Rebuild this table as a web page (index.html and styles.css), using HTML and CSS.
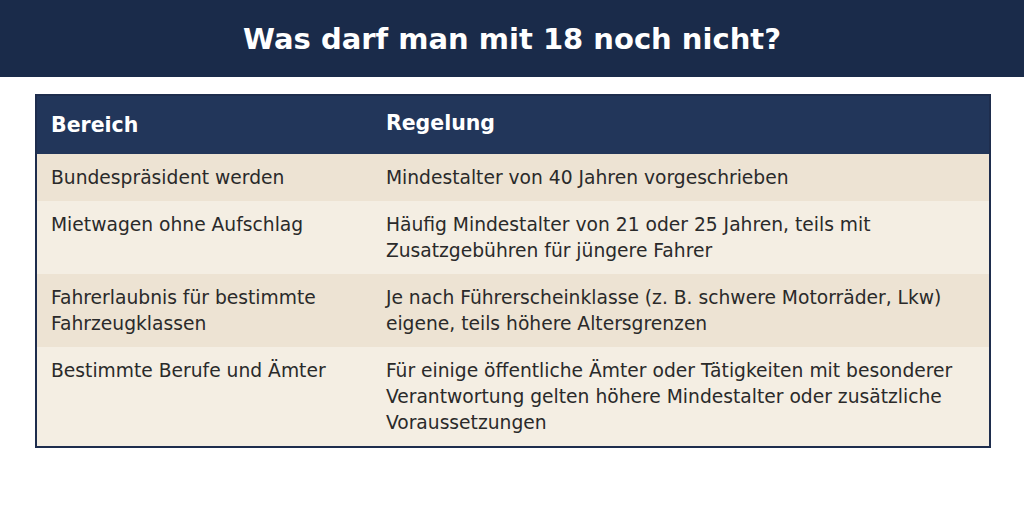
FILE: index.html
```html
<!DOCTYPE html>
<html lang="de">
<head>
<meta charset="utf-8">
<title>Was darf man mit 18 noch nicht?</title>
<link rel="stylesheet" href="styles.css">
</head>
<body>
<header class="banner">
  <h1 class="title">Was darf man mit 18 noch nicht?</h1>
</header>
<main class="content">
  <table class="rules">
    <thead>
      <tr>
        <th class="col-area">Bereich</th>
        <th class="col-rule">Regelung</th>
      </tr>
    </thead>
    <tbody>
      <tr class="odd">
        <td>Bundespräsident werden</td>
        <td>Mindestalter von 40 Jahren vorgeschrieben</td>
      </tr>
      <tr class="even">
        <td>Mietwagen ohne Aufschlag</td>
        <td>Häufig Mindestalter von 21 oder 25 Jahren, teils mit Zusatzgebühren für jüngere Fahrer</td>
      </tr>
      <tr class="odd">
        <td>Fahrerlaubnis für bestimmte Fahrzeugklassen</td>
        <td>Je nach Führerscheinklasse (z. B. schwere Motorräder, Lkw) eigene, teils höhere Altersgrenzen</td>
      </tr>
      <tr class="even">
        <td>Bestimmte Berufe und Ämter</td>
        <td>Für einige öffentliche Ämter oder Tätigkeiten mit besonderer Verantwortung gelten höhere Mindestalter oder zusätzliche Voraussetzungen</td>
      </tr>
    </tbody>
  </table>
</main>
</body>
</html>
```

FILE: styles.css
```css
* { box-sizing: border-box; }
html, body {
  margin: 0;
  padding: 0;
  background: #ffffff;
  font-family: "DejaVu Sans", sans-serif;
  color: #2a2a2a;
}
.banner {
  background: #1a2b4a;
  height: 77px;
  display: flex;
  align-items: center;
  justify-content: center;
}
.title {
  margin: 0;
  color: #ffffff;
  font-size: 29px;
  font-weight: bold;
}
.content {
  padding: 17px 33px 0 35px;
}
.rules {
  width: 100%;
  border-collapse: collapse;
  border: 2px solid #1e2d4d;
  font-size: 18.7px;
  line-height: 26px;
}
.rules th {
  background: #22365a;
  color: #ffffff;
  text-align: left;
  font-weight: bold;
  font-size: 20.5px;
  height: 59px;
  padding: 0 15px;
}
.rules th:first-child,
.rules td:first-child {
  padding-left: 14px;
}
.rules th + th,
.rules td + td {
  padding-left: 16px;
}
.rules .col-area {
  width: 35%;
}
.rules .col-rule {
  padding-bottom: 5px;
}
.rules td {
  vertical-align: top;
  padding-top: 11px;
  padding-right: 15px;
  padding-bottom: 10px;
}
.rules tr.odd td { background: #ede3d3; }
.rules tr.even td { background: #f4eee3; }
```
